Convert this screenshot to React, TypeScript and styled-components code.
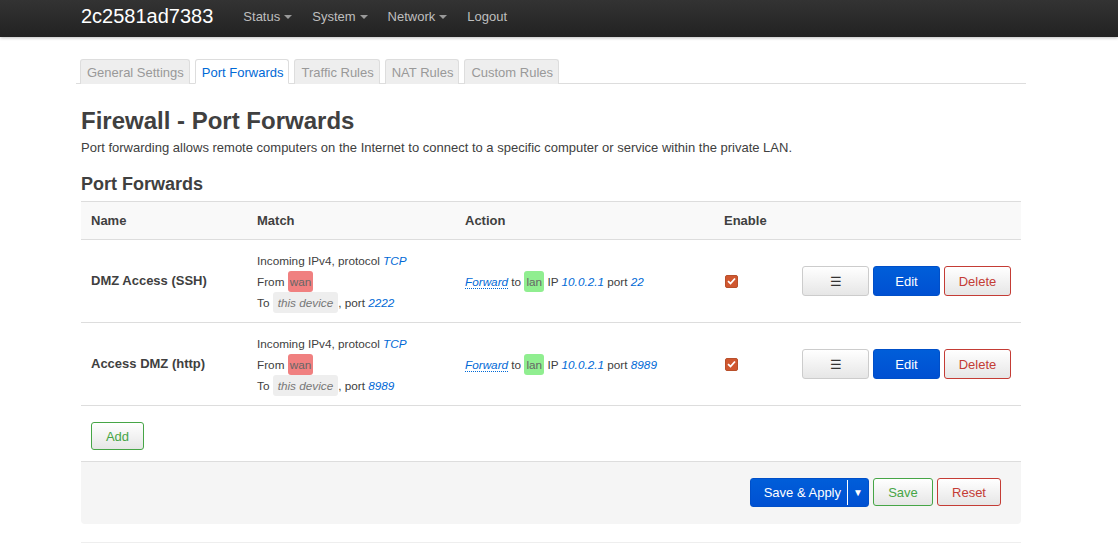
import React from "react";
import styled, { createGlobalStyle } from "styled-components";

const Global = createGlobalStyle`
  html, body { margin: 0; padding: 0; background: #fff; }
  body {
    font-family: "Liberation Sans", Arial, sans-serif;
    font-size: 13px;
    line-height: 18px;
    color: #404040;
  }
  * { box-sizing: border-box; }
`;

const Topbar = styled.div`
  height: 37px;
  background: linear-gradient(#333, #222);
  box-shadow: 0 1px 3px rgba(0,0,0,0.25);
`;

const TopInner = styled.div`
  width: 940px;
  margin: 0 0 0 81px;
  display: flex;
  align-items: center;
  height: 100%;
`;

const Brand = styled.a`
  font-size: 20px;
  color: #fff;
  padding-right: 20px;
  text-decoration: none;
  line-height: 37px;
  margin-top: -4px;
`;

const NavItem = styled.a`
  color: #bfbfbf;
  font-size: 13px;
  padding: 0 10px;
  text-decoration: none;
  line-height: 37px;
  display: flex;
  align-items: center;
  margin-top: -4px;
`;

const Caret = styled.span`
  display: inline-block;
  width: 0;
  height: 0;
  border-left: 4px solid transparent;
  border-right: 4px solid transparent;
  border-top: 4px solid #999;
  margin-left: 4px;
  margin-top: 1px;
`;

const Container = styled.div`
  width: 940px;
  margin-left: 81px;
`;

const Tabs = styled.ul`
  list-style: none;
  margin: 22px -5px 0;
  padding: 0 0 0 4px;
  display: flex;
  gap: 5px;
  border-bottom: 1px solid #ddd;
  height: 25px;
`;

const Tab = styled.li<{ $active?: boolean }>`
  height: 25px;
  padding: 0 5px 0 6px;
  line-height: 25px;
  border: 1px solid #ddd;
  border-bottom: ${(p) => (p.$active ? "1px solid #fff" : "none")};
  border-radius: 3px 3px 0 0;
  background: ${(p) => (p.$active ? "#fff" : "#eee")};
  color: ${(p) => (p.$active ? "#0069d6" : "#999")};
  font-size: 13px;
  white-space: nowrap;
`;

const Title = styled.h2`
  font-size: 24px;
  font-weight: bold;
  margin: 24px 0 0;
  line-height: 26px;
  color: #404040;
`;

const Desc = styled.div`
  margin-top: 5px;
  font-size: 13px;
`;

const SectionTitle = styled.h3`
  font-size: 18px;
  font-weight: bold;
  margin: 17px 0 0;
  line-height: 20px;
`;

const Table = styled.div`
  margin-top: 7px;
  border-top: 1px solid #ddd;
`;

const Row = styled.div<{ $head?: boolean }>`
  display: grid;
  grid-template-columns: 166px 208px 259px 1fr auto;
  align-items: center;
  height: ${(p) => (p.$head ? "38px" : "83px")};
  background: ${(p) => (p.$head ? "#f9f9f9" : "#fff")};
  border-bottom: 1px solid #ddd;
  padding-left: 10px;
`;

const HeadCell = styled.div`
  font-weight: bold;
  font-size: 13px;
  padding-top: 1px;
`;

const NameCell = styled.div`
  font-weight: bold;
  font-size: 13px;
`;

const MatchCell = styled.div`
  font-size: 11.75px;
  line-height: 21px;
  display: flex;
  flex-direction: column;
  padding-top: 1px;
`;

const Val = styled.var`
  color: #0069d6;
  font-style: italic;
`;

const Badge = styled.span<{ $kind: "wan" | "lan" | "dev" }>`
  display: inline-block;
  border-radius: 3px;
  line-height: 21px;
  background: ${(p) =>
    p.$kind === "wan" ? "#f08080" : p.$kind === "lan" ? "#90ee90" : "#eee"};
  color: ${(p) => (p.$kind === "dev" ? "#777" : "#666")};
  font-style: ${(p) => (p.$kind === "dev" ? "italic" : "normal")};
  padding: ${(p) => (p.$kind === "dev" ? "0 5px" : "0 2px")};
`;

const ActionCell = styled.div`
  font-size: 11.75px;
`;

const ForwardLink = styled.var`
  color: #0069d6;
  font-style: italic;
  border-bottom: 1px dotted #0069d6;
`;

const Check = styled.span`
  display: inline-flex;
  width: 13px;
  height: 13px;
  border-radius: 2px;
  background: #d0572f;
  border: 1px solid #b8502b;
  align-items: center;
  justify-content: center;
  margin: 3px 0 0 1px;
`;

const BtnGroup = styled.div`
  display: flex;
  gap: 4px;
  justify-content: flex-end;
  padding-right: 10px;
`;

const Btn = styled.button<{ $variant?: "neutral" | "primary" | "negative" | "positive"; $w?: number }>`
  font-family: "Liberation Sans", Arial, sans-serif;
  font-size: 13px;
  height: 30px;
  padding: 0 8px;
  border-radius: 3px;
  cursor: pointer;
  width: ${(p) => (p.$w ? `${p.$w}px` : "auto")};
  ${(p) => {
    switch (p.$variant) {
      case "primary":
        return `background: linear-gradient(#005ed9, #0050d2); color: #fff; border: 1px solid #004fc8;`;
      case "negative":
        return `background: linear-gradient(#fff, #e6e6e6); color: #c43c35; border: 1px solid #c43c35;`;
      case "positive":
        return `background: linear-gradient(#fff, #e6e6e6); color: #46a546; border: 1px solid #46a546;`;
      default:
        return `background: linear-gradient(#fff, #e6e6e6); color: #333; border: 1px solid #ccc;`;
    }
  }}
`;

const AddRow = styled.div`
  padding: 16px 10px 11px;
`;

const Actions = styled.div`
  background: #f5f5f5;
  border-top: 1px solid #ddd;
  border-radius: 0 0 4px 4px;
  height: 63px;
  display: flex;
  justify-content: flex-end;
  align-items: flex-start;
  gap: 4px;
  padding: 16px 20px 0 0;
`;

const SplitBtn = styled.div`
  display: flex;
  height: 29px;
  background: linear-gradient(#005ed9, #0050d2);
  border: 1px solid #004fc8;
  border-radius: 3px;
  color: #fff;
  font-size: 13px;
  align-items: stretch;
`;

const SplitMain = styled.span`
  padding: 0 6px 0 13px;
  display: flex;
  align-items: center;
  border-right: 1px solid #fff;
  margin: 1px 0;
`;

const SplitArrow = styled.span`
  width: 20px;
  display: flex;
  align-items: center;
  justify-content: center;
  font-size: 10px;
`;

const Footer = styled.div`
  margin-top: 18px;
  border-top: 1px solid #eee;
  height: 16px;
`;

const rows = [
  { name: "DMZ Access (SSH)", port: "2222", dport: "22" },
  { name: "Access DMZ (http)", port: "8989", dport: "8989" },
];

export default function App() {
  return (
    <>
      <Global />
      <Topbar>
        <TopInner>
          <Brand>2c2581ad7383</Brand>
          <NavItem>Status<Caret /></NavItem>
          <NavItem>System<Caret /></NavItem>
          <NavItem>Network<Caret /></NavItem>
          <NavItem>Logout</NavItem>
        </TopInner>
      </Topbar>
      <Container>
        <Tabs>
          <Tab>General Settings</Tab>
          <Tab $active>Port Forwards</Tab>
          <Tab>Traffic Rules</Tab>
          <Tab>NAT Rules</Tab>
          <Tab>Custom Rules</Tab>
        </Tabs>
        <Title>Firewall - Port Forwards</Title>
        <Desc>
          Port forwarding allows remote computers on the Internet to connect to a specific computer or service within the private LAN.
        </Desc>
        <SectionTitle>Port Forwards</SectionTitle>
        <Table>
          <Row $head>
            <HeadCell>Name</HeadCell>
            <HeadCell>Match</HeadCell>
            <HeadCell>Action</HeadCell>
            <HeadCell>Enable</HeadCell>
            <div />
          </Row>
          {rows.map((r) => (
            <Row key={r.name}>
              <NameCell>{r.name}</NameCell>
              <MatchCell>
                <span>Incoming IPv4, protocol <Val>TCP</Val></span>
                <span>From <Badge $kind="wan">wan</Badge></span>
                <span>To <Badge $kind="dev">this device</Badge>, port <Val>{r.port}</Val></span>
              </MatchCell>
              <ActionCell>
                <ForwardLink>Forward</ForwardLink> to <Badge $kind="lan">lan</Badge> IP <Val>10.0.2.1</Val> port <Val>{r.dport}</Val>
              </ActionCell>
              <div>
                <Check>
                  <svg width="9" height="8" viewBox="0 0 9 8">
                    <path d="M1 4.2 L3.5 6.5 L8 1.5" fill="none" stroke="#fff" strokeWidth="1.8" />
                  </svg>
                </Check>
              </div>
              <BtnGroup>
                <Btn $w={67}>☰</Btn>
                <Btn $variant="primary" $w={67}>Edit</Btn>
                <Btn $variant="negative" $w={67}>Delete</Btn>
              </BtnGroup>
            </Row>
          ))}
        </Table>
        <AddRow>
          <Btn $variant="positive" $w={53} style={{ height: 28 }}>Add</Btn>
        </AddRow>
        <Actions>
          <SplitBtn>
            <SplitMain>Save &amp; Apply</SplitMain>
            <SplitArrow>▼</SplitArrow>
          </SplitBtn>
          <Btn $variant="positive" $w={60} style={{ height: 28 }}>Save</Btn>
          <Btn $variant="negative" $w={64} style={{ height: 28 }}>Reset</Btn>
        </Actions>
        <Footer />
      </Container>
    </>
  );
}
